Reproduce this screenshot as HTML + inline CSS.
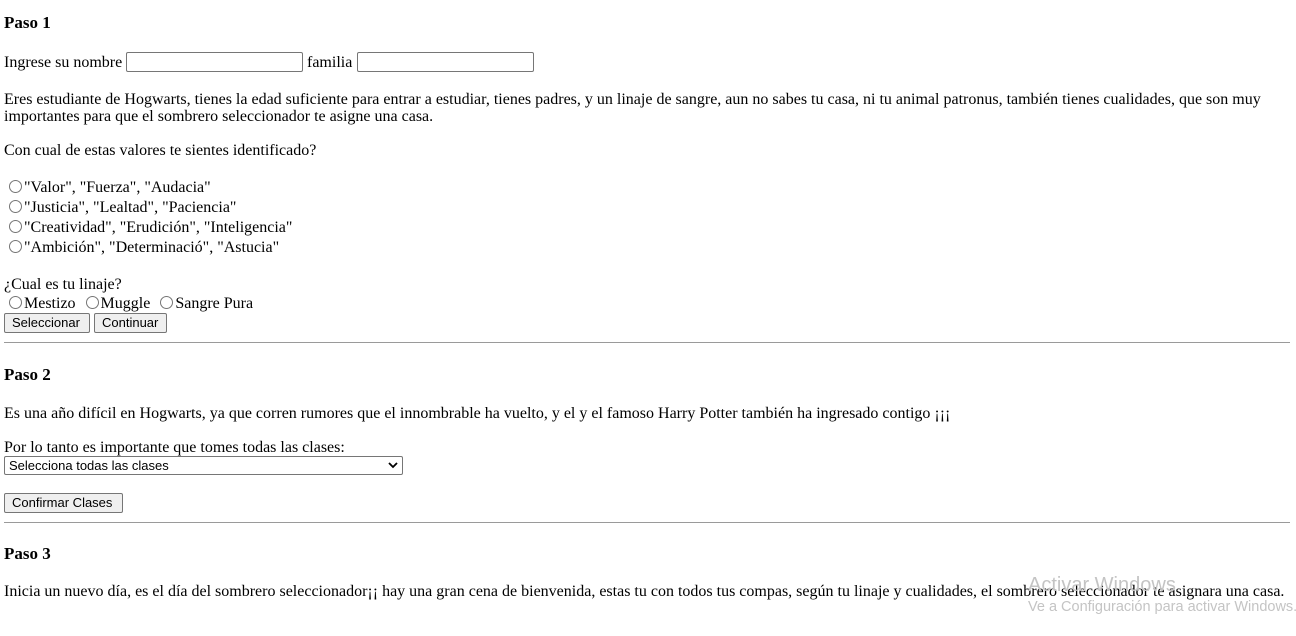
<!DOCTYPE html>
<html><head><meta charset="utf-8"><style>
body{margin:0;width:1296px;height:636px;overflow:hidden;background:#fff;font-family:"Liberation Serif",serif;font-size:16px;color:#000;position:relative}
.a{position:absolute;white-space:nowrap;line-height:17px}
h3{position:absolute;margin:0;font-size:17px;font-weight:bold;line-height:20px;left:4px}
.inp{position:absolute;top:52px;width:177px;height:20px;border:1px solid #767676;border-radius:2px;box-sizing:border-box}
.r{display:inline-block;width:13px;height:13px;border:1px solid #767676;border-radius:50%;box-sizing:border-box;vertical-align:-1px;margin:0 2px 0 5px}
.btn{position:absolute;height:20px;border:1px solid #767676;border-radius:2px;background:#efefef;font-family:"Liberation Sans",sans-serif;font-size:13px;line-height:18px;padding:0 7px;box-sizing:border-box}
hr{position:absolute;left:4px;width:1286px;margin:0;border:0;border-top:1px solid #9a9a9a;height:0}
.wm{position:absolute;color:#c4c4c4;font-family:"Liberation Sans",sans-serif;white-space:nowrap}
</style></head><body>
<h3 style="top:13px">Paso 1</h3>
<div class="a" style="left:4px;top:54px">Ingrese su nombre</div>
<div class="inp" style="left:126px"></div>
<div class="a" style="left:307px;top:54px">familia</div>
<div class="inp" style="left:357px"></div>
<div class="a" style="left:4px;top:91px;white-space:normal;width:1270px">Eres estudiante de Hogwarts, tienes la edad suficiente para entrar a estudiar, tienes padres, y un linaje de sangre, aun no sabes tu casa, ni tu animal patronus, también tienes cualidades, que son muy importantes para que el sombrero seleccionador te asigne una casa.</div>
<div class="a" style="left:4px;top:142px">Con cual de estas valores te sientes identificado?</div>
<div class="a" style="left:4px;top:179px"><span class="r"></span>"Valor", "Fuerza", "Audacia"</div>
<div class="a" style="left:4px;top:199px"><span class="r"></span>"Justicia", "Lealtad", "Paciencia"</div>
<div class="a" style="left:4px;top:219px"><span class="r"></span>"Creatividad", "Erudición", "Inteligencia"</div>
<div class="a" style="left:4px;top:239px"><span class="r"></span>"Ambición", "Determinació", "Astucia"</div>
<div class="a" style="left:4px;top:276px">¿Cual es tu linaje?</div>
<div class="a" style="left:4px;top:295px"><span class="r"></span>Mestizo<span class="r" style="margin-left:10px"></span>Muggle<span class="r" style="margin-left:10px"></span>Sangre Pura</div>
<div class="btn" style="left:4px;top:313px;width:86px">Seleccionar</div>
<div class="btn" style="left:94px;top:313px;width:73px">Continuar</div>
<hr style="top:342px">
<h3 style="top:365px">Paso 2</h3>
<div class="a" style="left:4px;top:405px">Es una año difícil en Hogwarts, ya que corren rumores que el innombrable ha vuelto, y el y el famoso Harry Potter también ha ingresado contigo ¡¡¡</div>
<div class="a" style="left:4px;top:439px">Por lo tanto es importante que tomes todas las clases:</div>
<div class="btn" style="left:4px;top:456px;width:399px;height:19px;background:#fff;padding:0 4px;line-height:17px">Selecciona todas las clases<svg style="position:absolute;right:4px;top:5px" width="10" height="7" viewBox="0 0 10 7"><path d="M1 1l4 4 4-4" fill="none" stroke="#000" stroke-width="1.8"/></svg></div>
<div class="btn" style="left:4px;top:493px;width:119px">Confirmar Clases</div>
<hr style="top:522px">
<h3 style="top:544px">Paso 3</h3>
<div class="a" style="left:4px;top:583px">Inicia un nuevo día, es el día del sombrero seleccionador¡¡ hay una gran cena de bienvenida, estas tu con todos tus compas, según tu linaje y cualidades, el sombrero seleccionador te asignara una casa.</div>
<div class="wm" style="left:1028px;top:574px;font-size:20px">Activar Windows</div>
<div class="wm" style="left:1028px;top:599px;font-size:14.5px">Ve a Configuración para activar Windows.</div>
</body></html>
